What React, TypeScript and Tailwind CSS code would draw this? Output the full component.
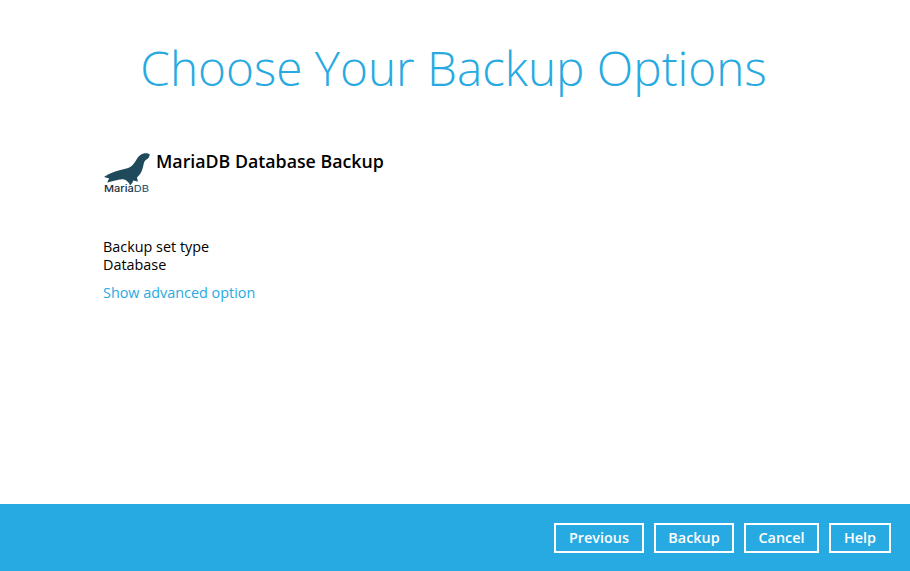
export default function App() {
  return (
    <div className="w-[910px] h-[571px] flex flex-col bg-white font-['Open_Sans',sans-serif] overflow-hidden">
      <div className="flex-1 min-h-0">
        <h1 className="mt-[34px] pr-[3px] text-center text-[47.7px] leading-[68px] font-light text-[#27aae1]">Choose Your Backup Options</h1>
        <div className="ml-[103px] mt-[49px]">
          <div className="flex items-start">
            <svg width="48" height="42" viewBox="0 0 48 42" className="mr-[5px] mt-[1px]">
              <path d="M46.8 2.6C45.4 1.4 43 1 40.6 1.6C37.6 2.4 35.6 4.4 33.8 7C32 9.8 30.4 13 27.6 14.8C24.6 16.7 20.6 17.2 16.4 18.2C10.8 19.5 5.6 21.8 1 25C2.8 25.4 4.6 25.8 6.2 26.6C5.4 27.9 4.6 29.2 4.2 30.6C7 30.2 9.6 29.2 12 28.6C14.6 27.9 17 27 19.6 27.2C21.8 27.4 23.6 28.4 25 30C26 31 26.6 32.2 27 33.4C28.8 32 30 30.4 30.2 28.6C31.8 28.8 33.2 29.2 34.8 29.8C34.8 28.2 34.4 26.8 33.9 25.6C36.8 23.2 38.6 20.2 39.6 16.6C40.4 13.6 40.6 11 41.8 9C43 7.4 44.8 7 45.8 5.4C46.3 4.5 46.6 3.6 46.8 2.6Z" fill="#1f4a5c" />
              <text x="1" y="39.5" fontSize="9.5" textLength="45" lengthAdjust="spacingAndGlyphs" fontFamily="Inter" fontWeight="500">
                <tspan fill="#16303c">Maria</tspan>
                <tspan fill="#2f6277">DB</tspan>
              </text>
            </svg>
            <div className="-mt-[2px] text-[17.77px] leading-[24px] font-semibold text-black">MariaDB Database Backup</div>
          </div>
          <div className="mt-[44px] text-[14.4px] leading-[18px] text-black">Backup set type</div>
          <div className="text-[14.4px] leading-[18px] text-black">Database</div>
          <div className="mt-[10px] text-[14.4px] leading-[18px] text-[#27aae1]">Show advanced option</div>
        </div>
      </div>
      <div className="h-[67px] bg-[#27aae1] flex items-center justify-end gap-[10px] pr-[19px]">
        <button className="h-[30px] w-[90px] border-2 border-white text-white text-[14.4px] font-semibold">Previous</button>
        <button className="h-[30px] w-[80px] border-2 border-white text-white text-[14.4px] font-semibold">Backup</button>
        <button className="h-[30px] w-[75px] border-2 border-white text-white text-[14.4px] font-semibold">Cancel</button>
        <button className="h-[30px] w-[62px] border-2 border-white text-white text-[14.4px] font-semibold">Help</button>
      </div>
    </div>
  );
}
